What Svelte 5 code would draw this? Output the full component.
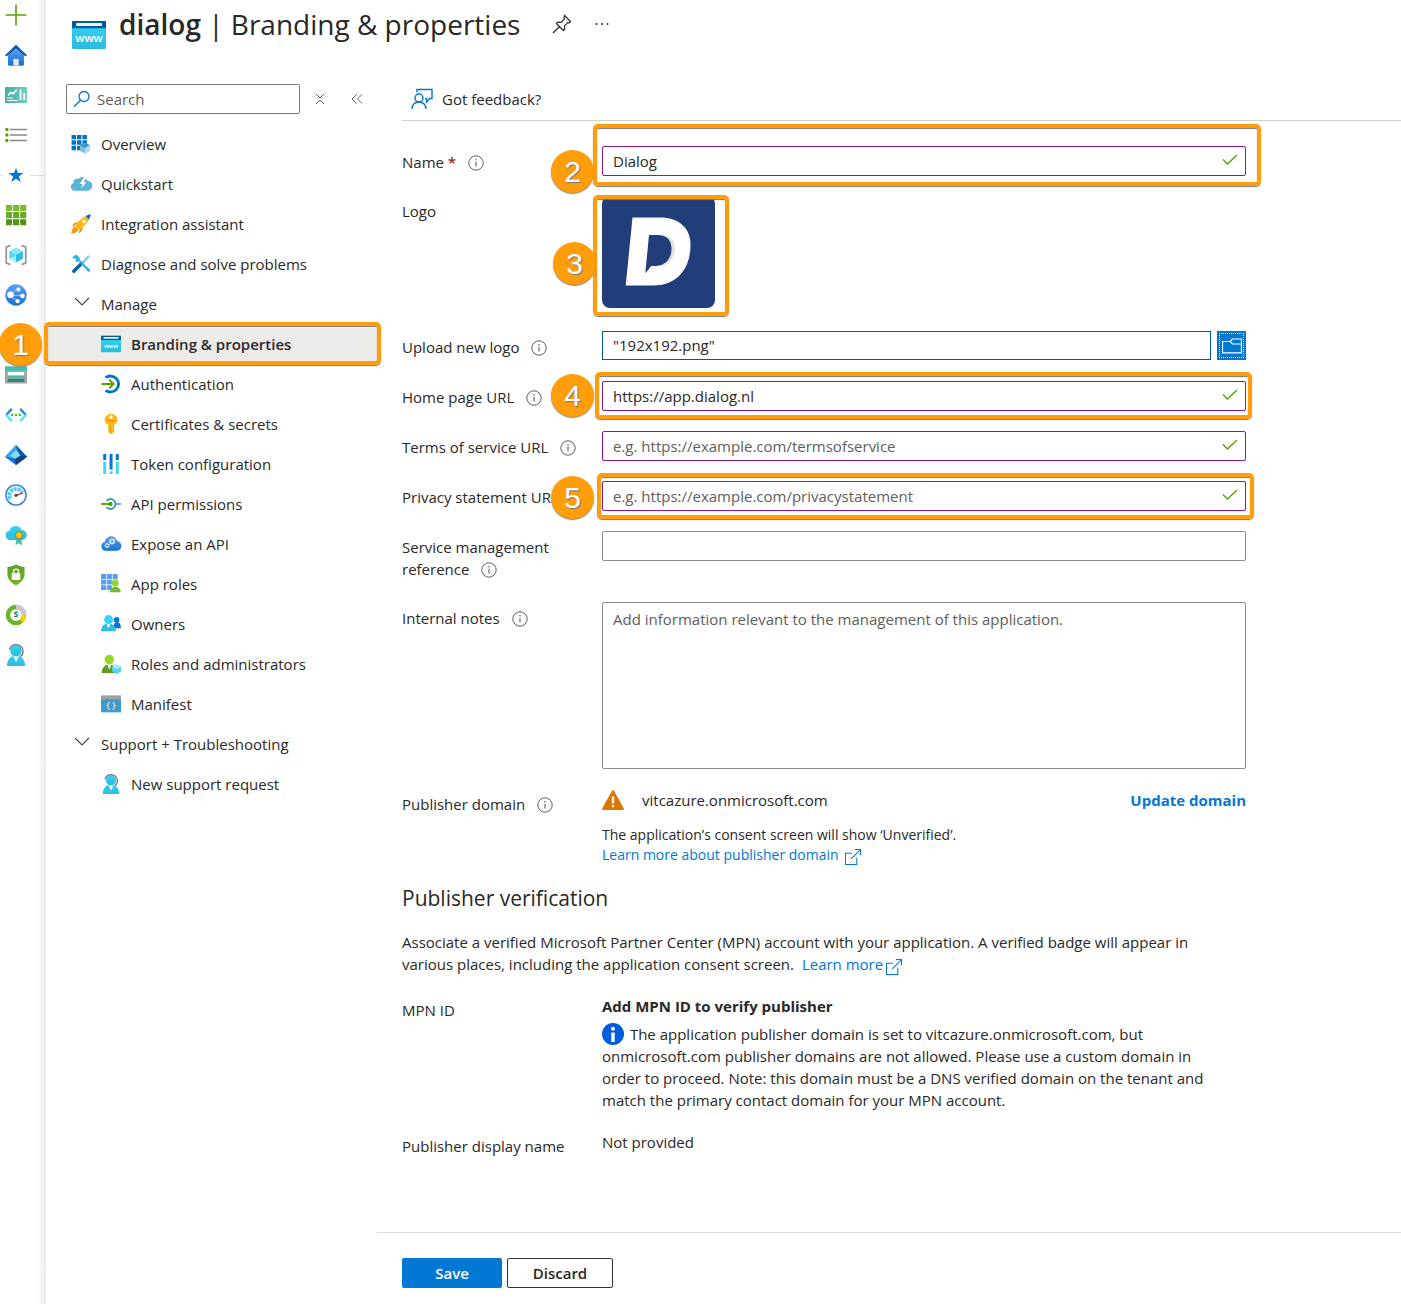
<script>
  let name = $state('Dialog');
  let logoFile = $state('"192x192.png"');
  let homePage = $state('https://app.dialog.nl');
  let terms = $state('');
  let privacy = $state('');
  let reference = $state('');
  let notes = $state('');
  let search = $state('');

  const person = (fill, x = 0) =>
    `<g transform="translate(${x} 0)" fill="${fill}"><path d="M15.5 18H2.5c-.7 0-1-.5-.9-1.1C2.300 12.500 4.500 9.500 9 9.500s6.700 3 7.400 7.400c.1.6-.3 1.100-.9 1.100Z"/><path d="M6.800 9.800 9 15l2.200-5.200Z" fill="#fff"/><circle cx="9" cy="5.500" r="4.700"/></g>`;

  const support =
    person('url(#cyan)') +
    '<path d="M3.600 4.500C4.500 1.800 6.600.5 9 .5c3.400 0 5.800 2.400 5.800 5.500 0 2-.6 3.500-2.300 4.200" fill="none" stroke="#767676" stroke-width="1.100"/>';

  const cube =
    '<path d="m9 3 5.500 3v6L9 15l-5.500-3V6Z" fill="#50d4ef"/><path d="m9 3 5.500 3L9 9 3.500 6Z" fill="#8ae6fb"/><path d="M9 9v6l-5.500-3Z" fill="#9cebff"/><path d="M9 9v6l5.500-3V6Z" fill="#32bedd"/>';

  const browser = (size) =>
    `<path d="M0 1.600h18v14.200a.6.6 0 0 1-.6.6H.6a.6.6 0 0 1-.6-.6Z" fill="url(#cyan)"/><path d="M0 5.400V2.200c0-.3.300-.6.600-.6h16.800c.3 0 .6.300.6.600v3.200Z" fill="#005ba1"/><rect x="2.200" y="2.700" width="13.600" height="1.600" rx=".3" fill="#f2f2f2"/><text x="9" y="12.500" font-size="${size}" font-weight="600" font-family="Open Sans, sans-serif" fill="#fff" text-anchor="middle">www</text>`;

  // All icons are drawn on an 18x18 grid
  const icons = {
    plus: '<path d="M9 .5v17M.5 9h17" stroke="#57a300" stroke-width="1.300"/>',
    home: '<path d="M3 8.500 9 3l6 5.500V17a.6.6 0 0 1-.6.6H3.600A.6.6 0 0 1 3 17Z" fill="url(#blue)"/><path d="M9 .6 0 9.300l1.100 1L3 8.800 9 4l6 4.800 1.900 1.500 1.100-1Z" fill="#0a5aa8"/><path d="M9 3.500 2.500 9.300V17c0 .4.300.6.600.6h11.800c.3 0 .6-.2.600-.6V9.300Z" fill="url(#blue)"/><path d="M6.800 12.200h4.400v5.400H6.800Z" fill="#e6e6e6"/>',
    dashboard: '<rect y="2.500" width="18" height="13" rx=".4" fill="url(#teal)"/><path d="M1.500 11.500h5M1.500 13.500h8.800" stroke="#fff" stroke-width=".9"/><path d="m2.500 9.500 2.200-2.700 1.800 1.300 3-3.300" fill="none" stroke="#fff" stroke-width="1.300"/><path d="M12 4.500h1.500V13H12ZM15 7.500h1.500V13H15Z" fill="#fff"/>',
    list: '<g fill="#57a300"><circle cx="1.500" cy="4.500" r="1.400"/><circle cx="1.500" cy="9" r="1.400"/><circle cx="1.500" cy="13.500" r="1.400"/></g><path d="M4 4.500h14M4 9h14M4 13.500h14" stroke="#8a8a8a" stroke-width="1.300"/>',
    star: '<path d="m9 3 1.500 4.400h4.700l-3.800 2.800 1.500 4.500L9 12l-3.900 2.700 1.500-4.500-3.800-2.800h4.700Z" fill="#0078d4"/>',
    grid: '<path d="M.8.8h5v5h-5ZM6.600.8h5v5h-5ZM12.400.8h5v5h-5Z" fill="#76bc2d"/><path d="M.8 6.600h5v5h-5ZM6.600 6.600h5v5h-5ZM12.400 6.600h5v5h-5Z" fill="#69ac23"/><path d="M.8 12.400h5v5h-5ZM6.600 12.400h5v5h-5ZM12.400 12.400h5v5h-5Z" fill="#559316"/>',
    group: cube + '<path d="M4.500 1.200 1 2.500v13l3.500 1.300M13.500 1.200 17 2.500v13l-3.500 1.300" fill="none" stroke="#999" stroke-width="1.500"/>',
    globe: '<circle cx="9" cy="9" r="8.700" fill="url(#blue)"/><path d="M4 9 11.500 2.500M4 9l6 5.200M4 9l10 .5" stroke="#9cc8f7" stroke-width=".8"/><circle cx="4.500" cy="8.800" r="2.700" fill="#fff"/><circle cx="11" cy="4.600" r="1.700" fill="#fff"/><circle cx="14.300" cy="9.800" r="1.900" fill="#fff"/><circle cx="10.300" cy="14" r="1.800" fill="#fff"/>',
    database: '<rect x="4" y="3" width="10" height="12" rx="3" fill="#0078d4"/>',
    storage: '<path d="M0 2h18v13.400a.6.6 0 0 1-.6.6H.6a.6.6 0 0 1-.6-.6Z" fill="#a3a3a3"/><path d="M0 2h18v3.400H0Z" fill="#37c2b1"/><rect x="2.300" y="6.500" width="13.400" height="3" fill="#fff"/><rect x="2.300" y="9.500" width="13.400" height="2" fill="#37c2b1"/><rect x="2.300" y="12.200" width="13.400" height="2.400" fill="#258277"/>',
    network: '<path d="M5.500 4 1 9M12.500 4 17 9" fill="none" stroke="#1e8fe0" stroke-width="2"/><path d="m1 9 4.500 5M17 9l-4.500 5" stroke="#50e6ff" stroke-width="2"/><g fill="#6bb42a"><circle cx="5.800" cy="9" r="1.100"/><circle cx="9" cy="9" r="1.100"/><circle cx="12.200" cy="9" r="1.100"/></g>',
    entra: '<path d="M9 .8 18 10.500 9 17.200 0 10.500Z" fill="#2f8fe0"/><path d="M9 .8 18 10.500 13.500 14Z" fill="#0f59a8"/><path d="M9 .8v11L0 10.500Z" fill="#38a9e8"/><path d="M0 10.500 9 17.200l3-2.200-3-3.500Z" fill="#1b75cf"/><path d="M9 17.200 18 10.500 13 8.500 8 12Z" fill="#143f88"/><path d="m9 5 3.800 4.500L8.500 12 4 9.900Z" fill="#7fdcf5"/>',
    monitor: '<circle cx="9" cy="9" r="8.200" fill="#fff" stroke="#3b86df" stroke-width="1.300"/><path d="M4.200 12.200A5.500 5.500 0 1 1 14 7" fill="none" stroke="#50c8ea" stroke-width="3" stroke-dasharray="2.400 .7"/><path d="m9 9.300 5.500-2" stroke="#e62c2c" stroke-width="1.200"/><circle cx="9" cy="9.300" r="1.300" fill="#444"/>',
    advisor: '<path d="M4 13a3.800 3.800 0 0 1-.4-7.500A5.300 5.300 0 0 1 13.600 5 4 4 0 0 1 14 13Z" fill="url(#cyan)"/><path d="m9.500 12-1 5 2.700-1.200L14 17.500 13.400 12Z" fill="#37c2b1"/><circle cx="11.500" cy="9.200" r="2.900" fill="#ffca00" stroke="#8b7a33" stroke-width=".8"/>',
    shield: '<path d="M9 .5c2.200 1.300 4.300 1.800 7 1.900v6c0 4.500-3.500 7.300-7 9.100C5.500 15.700 2 12.900 2 8.400v-6C4.700 2.300 6.800 1.800 9 .5Z" fill="url(#green)"/><rect x="5.500" y="7.500" width="7" height="5.500" rx=".5" fill="#fff"/><path d="M7 8V6.200a2 2 0 0 1 4 0V8" fill="none" stroke="#fff" stroke-width="1.200"/>',
    cost: '<circle cx="9" cy="9" r="6.600" fill="#fff" stroke="#6bb42a" stroke-width="3.600"/><path d="M9 2.400A6.600 6.600 0 0 1 15.600 9" fill="none" stroke="#c8c8c8" stroke-width="3.600"/><path d="M15.600 9a6.600 6.600 0 0 1-2.400 5.100" fill="none" stroke="#ffca00" stroke-width="3.600"/><text x="9" y="11.500" font-size="7" font-weight="700" font-family="Open Sans, sans-serif" fill="#1e8a70" text-anchor="middle">$</text>',
    support,
    overview: '<path d="M.5.8h4v4h-4ZM5.400.8h4v4h-4ZM10.300.8h4v4h-4ZM.5 5.700h4v4h-4ZM5.400 5.700h4v4h-4ZM10.300 5.700h4v4h-4ZM.5 10.600h4v4h-4ZM5.400 10.600h4v4h-4Z" fill="#0072c6"/><path d="m12.500 7.800 4.500 2.400v4.900l-4.500 2.500L8 15.100v-4.900Z" fill="#7fbfe0"/><path d="m12.500 7.800 4.500 2.400-4.500 2.500L8 10.200Z" fill="#3999c6"/><path d="M12.500 12.700v4.900l4.500-2.500v-4.900Z" fill="#b4dcf0"/>',
    quickstart: '<path d="M3.500 15A3.500 3.500 0 0 1 2 8.300a3.800 3.800 0 0 1 4.800-4A4.700 4.700 0 0 1 14.800 6 4.300 4.300 0 0 1 14.500 15Z" fill="#59b4d9"/><path d="m12 2.800-4.300 6h2.800L8.800 13.500l5-6h-2.700l2.700-4Z" fill="#fff"/>',
    rocket: '<path d="M6 7.500C3.800 7.200 2 8.500.8 11.500L4.500 10ZM10.500 12c.2 2.300-.8 4-3.500 5.500l.8-4Z" fill="#f78d1e"/><path d="M5 12.800 3.500 11C1.500 12.500.8 14.500.2 17.800c3-.5 5.300-1.300 6.500-3.200Z" fill="#ff9300"/><path d="M17.800.2C12 1.500 6.500 5.500 3.800 11l3 3.200C12.300 11.500 16.500 6 17.800.2Z" fill="#fdb813"/><path d="M17.800.2c-1.700.3-3.300.9-4.700 1.700l3 3C16.900 3.300 17.500 1.900 17.800.2Z" fill="#0072c6"/><circle cx="11.700" cy="6.500" r="1.500" fill="#fff"/>',
    tools: '<path d="m15.500.9 1.500 1.500-5.500 6.200-1.700-1.500Z" fill="#8cc8e8"/><path d="m9.500 8.500-7 7" stroke="#0b63b5" stroke-width="3.200" stroke-linecap="round"/><path d="M4.500.9C2.900 1 1.400 2.500 1.200 4.200l2-.4 1.200 1.400-.3 1.900c1.200.2 2.200 0 3-.5l8 9.100c1.200 1 2.800-.5 2-1.800L8 5.300C8.300 3.600 6.500 1 4.500.9Z" fill="#2cb9e2"/>',
    branding: browser(5),
    auth: '<path d="M4.200 3.300A7.200 7.200 0 1 1 4.200 14.700" fill="none" stroke="#0072c6" stroke-width="2.500"/><path d="M.5 9H11" stroke="#57a300" stroke-width="1.800"/><path d="m7.500 5.200 3.800 3.800-3.800 3.800" fill="none" stroke="#57a300" stroke-width="1.800"/>',
    key: '<path d="M9 0c3.500 0 5.800 2.300 5.800 5.200 0 2-1 3.600-3 4.500v6.500L9.500 18h-1l-2-1.800V9.700c-2-.9-3.200-2.500-3.200-4.500C3.300 2.300 5.500 0 9 0Z" fill="#fdb813"/><circle cx="9" cy="2.600" r="1.400" fill="#fff"/><path d="M5.500 6h7" stroke="#e6850e" stroke-width="1"/><path d="M8.500 10.500v5.800" stroke="#f09a0e" stroke-width=".9"/>',
    token: '<path d="M2 0h2.700v5.500H2ZM7.700 0h2.700v14H7.700ZM13.300 0H16v5.500h-2.700Z" fill="#0078d4"/><path d="M2 7h2.700v11H2ZM7.700 15.500h2.700V18H7.700ZM13.300 7H16v11h-2.700Z" fill="#45d4f2"/>',
    permissions: '<path d="M5 6.200a4.500 4.500 0 1 1 0 5.600" fill="none" stroke="#3999c6" stroke-width="1.700"/><path d="M13 9h5" stroke="#3999c6" stroke-width="1.400"/><path d="M0 9h8" stroke="#57a300" stroke-width="1.700"/><circle cx="8.500" cy="9" r="2" fill="#57a300"/>',
    expose: '<path d="M3.800 15A3.900 3.900 0 0 1 3.500 7.300C3.800 4 6.300 2 9 2c2.800 0 4.800 1.700 5.400 4.300A4.300 4.300 0 0 1 13.800 15Z" fill="url(#blue)"/><circle cx="10" cy="6.800" r="1.900" fill="none" stroke="#fff" stroke-width="1.500" stroke-dasharray="1.200 .3"/><circle cx="5.500" cy="10.300" r="1.600" fill="none" stroke="#fff" stroke-width="1.300" stroke-dasharray="1 .3"/>',
    roles: '<path d="M0 0h4.800v4.500H0ZM5.500 0h4.300v4.500H5.500ZM10.500 0H15v4.500h-4.500ZM0 5.200h4.800v4.300H0ZM5.500 5.200h4.300v4.300H5.500ZM0 10.200h4.800v4.300H0ZM5.500 10.200h4.300v4.300H5.500ZM10.500 5.200H15v4.300h-4.500Z" fill="#5a9cf0"/><path d="M17.800 16.500H7.800c.3-3 2-5 5-5s4.700 2 5 5Z" fill="#76bc2d"/><circle cx="12.800" cy="8.200" r="3.100" fill="#86d633"/>',
    owners: '<path d="M18 12.800h-7c.1-3 1-5.300 3.500-5.300s3.200 2.300 3.500 5.300Z" fill="#0a6fd0"/><circle cx="14" cy="5.300" r="2.500" fill="#0078d4"/><path d="M13.500 15.500H0C.3 11 2.500 8.500 6.800 8.500s6.300 2.500 6.700 7Z" fill="#32bedd"/><path d="M5 8.600 6.800 13l1.800-4.400Z" fill="#fff"/><circle cx="6.800" cy="5" r="4" fill="#32d4f5"/>',
    admins: '<path d="M14 17H.5C1 12.500 3.200 9.500 7.500 9.500s6 3 6.500 7.500Z" fill="#5e9e1c"/><path d="M5.800 9.500 7.500 14.500l1.700-5Z" fill="#fff"/><circle cx="7.500" cy="5" r="4.300" fill="#9bd62b"/><path d="m14 9.500 4 2v4.300l-4 2.200-4-2.200v-4.300Z" fill="#50d4ef"/><path d="m14 9.500 4 2-4 2.200-4-2.200Z" fill="#a5edff"/>',
    manifest: '<path d="M0 1.500h18v15H0Z" fill="#3f9cc8"/><path d="M0 1.500h18v3.300H0Z" fill="#a0a1a2"/><text x="9" y="13.500" font-size="8" font-family="Open Sans, sans-serif" fill="#fff" text-anchor="middle">{ }</text>',
    www: browser(6)
  };

  const rail = [
    ['plus', 'Create a resource'], ['home', 'Home'], ['dashboard', 'Dashboard'],
    ['list', 'All services'], ['star', 'Favorites'], ['grid', 'All resources'],
    ['group', 'Resource groups'], ['globe', 'App Services'], ['database', 'Databases'],
    ['storage', 'Storage accounts'], ['network', 'Virtual networks'], ['entra', 'Directory'],
    ['monitor', 'Monitor'], ['advisor', 'Advisor'], ['shield', 'Security'],
    ['cost', 'Cost management'], ['support', 'Help and support']
  ];

  const menu = [
    { label: 'Overview', icon: 'overview' },
    { label: 'Quickstart', icon: 'quickstart' },
    { label: 'Integration assistant', icon: 'rocket' },
    { label: 'Diagnose and solve problems', icon: 'tools' },
    {
      label: 'Manage',
      items: [
        { label: 'Branding & properties', icon: 'branding', active: true },
        { label: 'Authentication', icon: 'auth' },
        { label: 'Certificates & secrets', icon: 'key' },
        { label: 'Token configuration', icon: 'token' },
        { label: 'API permissions', icon: 'permissions' },
        { label: 'Expose an API', icon: 'expose' },
        { label: 'App roles', icon: 'roles' },
        { label: 'Owners', icon: 'owners' },
        { label: 'Roles and administrators', icon: 'admins' },
        { label: 'Manifest', icon: 'manifest' }
      ]
    },
    {
      label: 'Support + Troubleshooting',
      items: [{ label: 'New support request', icon: 'support' }]
    }
  ];
</script>

{#snippet icon(key, size)}
  <svg class="icon" width={size} height={size} viewBox="0 0 18 18" aria-hidden="true">{@html icons[key]}</svg>
{/snippet}

{#snippet info()}
  <svg class="info" width="16" height="16" viewBox="0 0 16 16" aria-hidden="true">
    <circle cx="8" cy="8" r="7.200" fill="none" stroke="#605e5c" />
    <path d="M8 6.800v4.700" stroke="#605e5c" stroke-width="1.100" />
    <circle cx="8" cy="4.700" r=".8" fill="#605e5c" />
  </svg>
{/snippet}

{#snippet tick()}
  <svg class="tick" width="16" height="12" viewBox="0 0 16 12" aria-hidden="true">
    <path d="m1 5.500 4.500 4.500L15 1" fill="none" stroke="#57a300" stroke-width="1.400" />
  </svg>
{/snippet}

{#snippet external()}
  <svg class="external" width="16" height="16" viewBox="0 0 17 17" aria-hidden="true">
    <path d="M7.500 4.500h-7v12h12V9M10.500.6h6v6M16.500.6 6.500 10.500" fill="none" stroke="#0078d4" stroke-width="1.100" />
  </svg>
{/snippet}

{#snippet chevron()}
  <svg class="chevron" width="16" height="10" viewBox="0 0 16 10" aria-hidden="true">
    <path d="m1 1 7 7 7-7" fill="none" stroke="#484644" stroke-width="1.100" />
  </svg>
{/snippet}

<svg class="defs" width="0" height="0" aria-hidden="true">
  <defs>
    <linearGradient id="cyan" x2="0" y2="1"><stop stop-color="#32d4f5" /><stop offset="1" stop-color="#2bbbe0" /></linearGradient>
    <linearGradient id="blue" x2="0" y2="1"><stop stop-color="#5ea0ef" /><stop offset="1" stop-color="#1374d2" /></linearGradient>
    <linearGradient id="green" x2="0" y2="1"><stop stop-color="#5a9f1c" /><stop offset="1" stop-color="#76b52d" /></linearGradient>
    <linearGradient id="teal" x2="1"><stop stop-color="#3fae9d" /><stop offset="1" stop-color="#76cdbf" /></linearGradient>
  </defs>
</svg>

<div class="page">
  <nav class="rail" aria-label="Favorites">
    <ul>
      {#each rail as [key, title]}
        <li class:divided={key === 'star'}>
          <a href="#{key}" aria-label={title}>{@render icon(key, 22)}</a>
        </li>
      {/each}
    </ul>
  </nav>

  <div class="blade">
    <header>
      <svg width="34" height="34" viewBox="0 0 18 18" aria-hidden="true">{@html icons.www}</svg>
      <h1><strong>dialog</strong> | Branding &amp; properties</h1>
      <button class="plain pin" aria-label="Pin">
        <svg width="20" height="20" viewBox="0 0 20 20" aria-hidden="true">
          <path d="m12.500 1.500 6 6-1.200 1.300-1.500-.2-3.300 3.300.2 3.300-1.300 1.300-7-7 1.300-1.300 3.300.2 3.300-3.300-.2-1.500ZM7.500 12.500l-6.500 6.500" fill="none" stroke="#323130" stroke-width="1.300" />
        </svg>
      </button>
      <button class="plain" aria-label="More">
        <svg width="14" height="4" viewBox="0 0 14 4" aria-hidden="true" fill="#323130">
          <circle cx="1.500" cy="2" r="1" /><circle cx="7" cy="2" r="1" /><circle cx="12.500" cy="2" r="1" />
        </svg>
      </button>
    </header>

    <div class="columns">
      <nav class="menu" aria-label="Application">
        <div class="filter">
          <div class="search">
            <svg width="18" height="18" viewBox="0 0 18 18" aria-hidden="true">
              <circle cx="11" cy="6.500" r="5" fill="none" stroke="#0078d4" stroke-width="1.300" />
              <path d="M7.500 10.200 1 16.700" stroke="#0078d4" stroke-width="1.400" />
            </svg>
            <input type="text" aria-label="Search" placeholder="Search" bind:value={search} />
          </div>
          <button class="plain" aria-label="Collapse groups">
            <svg width="10" height="12" viewBox="0 0 10 12" aria-hidden="true">
              <path d="m1 1 4 4 4-4M1 11l4-4 4 4" fill="none" stroke="#605e5c" />
            </svg>
          </button>
          <button class="plain hide" aria-label="Hide menu">
            <svg width="12" height="12" viewBox="0 0 12 12" aria-hidden="true">
              <path d="M5.500 1.500 1 6l4.500 4.500M11 1.500 6.500 6l4.500 4.500" fill="none" stroke="#605e5c" />
            </svg>
          </button>
        </div>

        <ul>
          {#each menu as entry}
            {#if entry.items}
              <li>
                <button class="plain item">{@render chevron()}{entry.label}</button>
                <ul>
                  {#each entry.items as child}
                    <li>
                      <a class="item child" class:active={child.active} href="#{child.icon}">
                        {@render icon(child.icon, 20)}{child.label}
                        {#if child.active}
                          <span class="frame frame-menu"></span>
                          <span class="badge badge-menu">1</span>
                        {/if}
                      </a>
                    </li>
                  {/each}
                </ul>
              </li>
            {:else}
              <li><a class="item" href="#{entry.icon}">{@render icon(entry.icon, 20)}{entry.label}</a></li>
            {/if}
          {/each}
        </ul>
      </nav>

      <main>
        <div class="commands">
          <button class="plain">
            <svg width="22" height="22" viewBox="0 0 22 22" aria-hidden="true" fill="none" stroke="#0078d4" stroke-width="1.400">
              <path d="M6 4.500V1.500h15v9h-2.500L15.500 14v-3.500h-1.500" />
              <circle cx="8" cy="10" r="4" />
              <path d="M1 21c.3-4.300 3-7 7-7s6.500 2.700 7 7" />
            </svg>
            Got feedback?
          </button>
        </div>

        <form onsubmit={(e) => e.preventDefault()}>
          <div class="row">
            <label for="name">Name <span class="required">*</span> {@render info()}</label>
            <div class="control">
              <input id="name" class="valid" type="text" bind:value={name} />
              {@render tick()}
              <span class="frame frame-name"></span>
              <span class="badge badge-name">2</span>
            </div>
          </div>

          <div class="row logo-row">
            <span class="label">Logo</span>
            <div class="control">
              <svg class="logo" width="113" height="112" viewBox="0 0 113 112" role="img" aria-label="Logo">
                <rect width="113" height="112" rx="8" fill="#213e7a" />
                <path d="M30.500 21.500H58C77 21.500 88.500 32 88.500 49c0 24-14 40.500-37 40.500H23.700Z" fill="#fff" />
                <path d="M52 39h7c9 0 14 5.500 14 14 0 9-7 17-17 17Z" fill="#e1e2e6" />
                <path d="M47 39h8.500c9 0 14 5 14 13.500 0 11-7 17.500-16.500 17.500h-3q-2 0-3 3l-3.700 4.300Z" fill="#213e7a" />
              </svg>
              <span class="frame frame-logo"></span>
              <span class="badge badge-logo">3</span>
            </div>
          </div>

          <div class="row">
            <label for="upload">Upload new logo {@render info()}</label>
            <div class="control upload">
              <input id="upload" type="text" bind:value={logoFile} />
              <button type="button" aria-label="Browse">
                <svg width="20" height="16" viewBox="0 0 20 16" aria-hidden="true" fill="none" stroke="#fff" stroke-width="1.100">
                  <path d="M.6 3.500H8L10.500 1h8.900v13.900H.6ZM8 3.500 10.500 6h8.900" />
                </svg>
              </button>
            </div>
          </div>

          <div class="row">
            <label for="home">Home page URL {@render info()}</label>
            <div class="control">
              <input id="home" class="valid" type="text" bind:value={homePage} />
              {@render tick()}
              <span class="frame frame-home"></span>
              <span class="badge badge-home">4</span>
            </div>
          </div>

          <div class="row">
            <label for="terms">Terms of service URL {@render info()}</label>
            <div class="control">
              <input id="terms" class="valid" type="text" placeholder="e.g. https://example.com/termsofservice" bind:value={terms} />
              {@render tick()}
            </div>
          </div>

          <div class="row">
            <label for="privacy">Privacy statement URL</label>
            <div class="control">
              <input id="privacy" class="valid" type="text" placeholder="e.g. https://example.com/privacystatement" bind:value={privacy} />
              {@render tick()}
              <span class="frame frame-privacy"></span>
              <span class="badge badge-privacy">5</span>
            </div>
          </div>

          <div class="row">
            <label for="reference">Service management reference {@render info()}</label>
            <div class="control">
              <input id="reference" type="text" bind:value={reference} />
            </div>
          </div>

          <div class="row">
            <label for="notes">Internal notes {@render info()}</label>
            <div class="control">
              <textarea id="notes" placeholder="Add information relevant to the management of this application." bind:value={notes}></textarea>
            </div>
          </div>

          <div class="row">
            <span class="label">Publisher domain {@render info()}</span>
            <div class="control">
              <div class="domain">
                <svg width="22" height="20" viewBox="0 0 22 20" aria-hidden="true">
                  <path d="M10 .8c.5-.9 1.500-.9 2 0l9.800 17.700c.4.800 0 1.500-.8 1.500H1c-.8 0-1.200-.7-.8-1.500Z" fill="#db7500" />
                  <path d="M9.800 6.500h2.400v7H9.800ZM9.800 15h2.400v2.300H9.800Z" fill="#fff" />
                </svg>
                <span>vitcazure.onmicrosoft.com</span>
                <a href="#update">Update domain</a>
              </div>
              <p class="hint">
                The application’s consent screen will show ‘Unverified’.<br />
                <a href="#learn">Learn more about publisher domain {@render external()}</a>
              </p>
            </div>
          </div>

          <h2>Publisher verification</h2>
          <p class="intro">
            Associate a verified Microsoft Partner Center (MPN) account with your application. A verified badge will appear in
            various places, including the application consent screen. <a href="#mpn">Learn more{@render external()}</a>
          </p>

          <div class="row">
            <span class="label">MPN ID</span>
            <div class="control">
              <strong>Add MPN ID to verify publisher</strong>
              <p class="notice">
                <svg width="22" height="22" viewBox="0 0 22 22" aria-hidden="true">
                  <circle cx="11" cy="11" r="11" fill="#015cda" />
                  <circle cx="11" cy="5.800" r="2" fill="#fff" />
                  <path d="M9.300 9.500h3.400V19H9.300Z" fill="#fff" />
                </svg>
                The application publisher domain is set to vitcazure.onmicrosoft.com, but onmicrosoft.com publisher
                domains are not allowed. Please use a custom domain in order to proceed. Note: this domain must be a DNS
                verified domain on the tenant and match the primary contact domain for your MPN account.
              </p>
            </div>
          </div>

          <div class="row">
            <span class="label">Publisher display name</span>
            <div class="control">Not provided</div>
          </div>
        </form>

        <footer>
          <button class="primary">Save</button>
          <button class="secondary">Discard</button>
        </footer>
      </main>
    </div>
  </div>
</div>

<style>
  :global(body) {
    background: #fff;
  }

  .page,
  .page input,
  .page textarea,
  .page button {
    box-sizing: border-box;
    font-family: 'Open Sans', 'Noto Sans', sans-serif;
    font-size: 15px;
    line-height: 22px;
    color: #292827;
  }

  .page {
    display: flex;
    min-height: 100vh;
    overflow: hidden;
  }

  .defs {
    position: absolute;
  }

  ul {
    list-style: none;
    margin: 0;
    padding: 0;
  }

  p {
    margin: 0;
  }

  a {
    color: #0078d4;
    text-decoration: none;
  }

  .icon {
    flex: none;
    overflow: visible;
  }

  .plain {
    display: flex;
    align-items: center;
    padding: 0;
    border: 0;
    background: none;
    cursor: pointer;
  }

  /* Left icon rail */
  .rail {
    flex: none;
    width: 46px;
    background: linear-gradient(90deg, #fff 36px, #ececec 46px);
  }

  .rail ul {
    margin-top: -5px;
  }

  .rail li {
    height: 40px;
  }

  .rail a {
    display: flex;
    align-items: center;
    width: 22px;
    height: 40px;
    padding: 0 5px;
  }

  .rail .divided {
    background: linear-gradient(90deg, #ddd 2px, transparent 2px 30px, #ddd 30px) center / 100% 1px no-repeat;
  }

  .blade {
    flex: 1;
    min-width: 0;
    display: flex;
    flex-direction: column;
  }

  header {
    display: flex;
    align-items: center;
    height: 48px;
    margin-bottom: 36px;
    padding-left: 26px;
  }

  header > svg {
    margin-top: 22px;
  }

  h1 {
    margin: 0 32px 0 13px;
    font-size: 28px;
    line-height: 40px;
    font-weight: 400;
  }

  h1 strong {
    font-weight: 600;
  }

  .pin {
    margin-right: 23px;
  }

  .columns {
    flex: 1;
    display: flex;
  }

  /* Resource menu */
  .menu {
    flex: none;
    width: 331px;
  }

  .filter {
    display: flex;
    align-items: center;
    height: 30px;
    margin-bottom: 10px;
    padding-left: 20px;
  }

  .search {
    display: flex;
    align-items: center;
    gap: 6px;
    box-sizing: border-box;
    width: 234px;
    height: 30px;
    margin-right: 15px;
    padding-left: 6px;
    border: 1px solid #7a7876;
    border-radius: 2px;
  }

  .page .search input {
    flex: 1;
    min-width: 0;
    height: 28px;
    padding: 0;
    border: 0;
  }

  .hide {
    margin-left: 26px;
  }

  .page .item {
    position: relative;
    display: flex;
    align-items: center;
    gap: 10px;
    width: 100%;
    height: 40px;
    padding-left: 25px;
    color: #292827;
  }

  .item.child {
    width: auto;
    padding-left: 55px;
  }

  .item.active {
    font-weight: 600;
    background: linear-gradient(#edebe9, #edebe9) 0 4px / 100% 34px no-repeat;
  }

  .chevron {
    margin: 0 1px 4px 3px;
  }

  main {
    flex: 1;
    min-width: 0;
    display: flex;
    flex-direction: column;
  }

  .commands {
    margin-left: 25px;
    padding-left: 9px;
    height: 36px;
    border-bottom: 1px solid #d2d0ce;
  }

  .commands button {
    gap: 9px;
    height: 30px;
  }

  form {
    flex: 1;
    display: flex;
    flex-direction: column;
    gap: 20px;
    padding: 25px 25px 20px;
  }

  .row {
    display: grid;
    grid-template-columns: 200px minmax(0, 644px);
  }

  .row label {
    padding: 5px 0 2px;
  }

  .label {
    padding-top: 4px;
  }

  .required {
    color: #a4262c;
    font-weight: 600;
  }

  .info {
    margin-left: 8px;
    vertical-align: -3px;
  }

  .control {
    position: relative;
    min-height: 30px;
  }

  .page .control input,
  .page textarea {
    display: block;
    width: 100%;
    height: 30px;
    padding: 0 10px 1px;
    border: 1px solid #8a8886;
    border-radius: 2px;
    background: #fff;
    outline: 0;
  }

  .page .control .valid {
    padding-right: 36px;
    border-color: #881798;
  }

  .page textarea {
    height: 167px;
    padding: 5px 10px;
    resize: none;
  }

  input::placeholder,
  textarea::placeholder {
    color: #605e5c;
    opacity: 1;
  }

  .tick {
    position: absolute;
    top: 8px;
    right: 8px;
  }

  .logo-row .control {
    min-height: 115px;
  }

  .logo {
    display: block;
  }

  .upload {
    display: flex;
    gap: 6px;
  }

  .page .upload input {
    flex: 1;
    height: 29px;
    border-color: #005a9e;
    border-radius: 0;
  }

  .upload button {
    display: flex;
    align-items: center;
    justify-content: center;
    width: 29px;
    height: 29px;
    padding: 0;
    border: 1px solid #0078d4;
    background: #0078d4;
    outline: 1px dotted #fff;
    outline-offset: -3px;
  }

  .domain {
    display: flex;
    align-items: center;
  }

  .domain span {
    margin-left: 18px;
  }

  .domain a {
    margin-left: auto;
    font-weight: 700;
  }

  .hint {
    margin-top: 14px;
    font-size: 14px;
    line-height: 20px;
  }

  .external {
    vertical-align: -5px;
    margin-left: 3px;
  }

  h2 {
    margin: 0;
    font-size: 21px;
    line-height: 26px;
    font-weight: 400;
  }

  .intro {
    max-width: 820px;
  }

  .intro a {
    margin-left: 4px;
  }

  .notice {
    margin-top: 6px;
    padding-right: 20px;
  }

  .notice svg {
    margin: -4px 2px -4px 0;
    vertical-align: -1px;
  }

  footer {
    display: flex;
    gap: 5px;
    padding: 25px 25px 16px;
    border-top: 1px solid #dcdbda;
  }

  footer button {
    height: 30px;
    border-radius: 2px;
  }

  .page .primary {
    width: 100px;
    border: 0;
    background: #0078d4;
    color: #fff;
    font-weight: 600;
  }

  .page .secondary {
    width: 106px;
    border: 1px solid #323130;
    background: #fff;
    font-weight: 600;
  }

  /* Numbered callouts laid over the form */
  .frame {
    position: absolute;
    z-index: 1;
    border: 4px solid #ff9d0a;
    border-radius: 5px;
    box-shadow: 0 1px 1px #777, inset 0 1px 1px #777;
    pointer-events: none;
  }

  .frame-menu {
    inset: -2px -4px -1px -2px;
  }

  .frame-name {
    inset: -22px -15px -10px -9px;
  }

  .frame-logo {
    inset: -1px auto -5px -9px;
    width: 128px;
  }

  .frame-home {
    inset: -9px -6px -8px -7px;
  }

  .frame-privacy {
    inset: -8px -8px -8px -5px;
  }

  .badge {
    position: absolute;
    z-index: 2;
    width: 43px;
    height: 43px;
    border-radius: 50%;
    background: #ff9d0a;
    box-shadow: 0 1px 1px #888;
    color: #fff;
    font: 30px/43px 'Liberation Sans', Arial, sans-serif;
    text-align: center;
    text-shadow: 1px 1px 1px #777;
  }

  .badge-menu {
    top: -1px;
    left: -47px;
  }

  .badge-name {
    top: 4px;
    left: -51px;
  }

  .badge-logo {
    top: 46px;
    left: -49px;
  }

  .badge-home {
    top: -7px;
    left: -51px;
  }

  .badge-privacy {
    top: -5px;
    left: -51px;
  }
</style>
